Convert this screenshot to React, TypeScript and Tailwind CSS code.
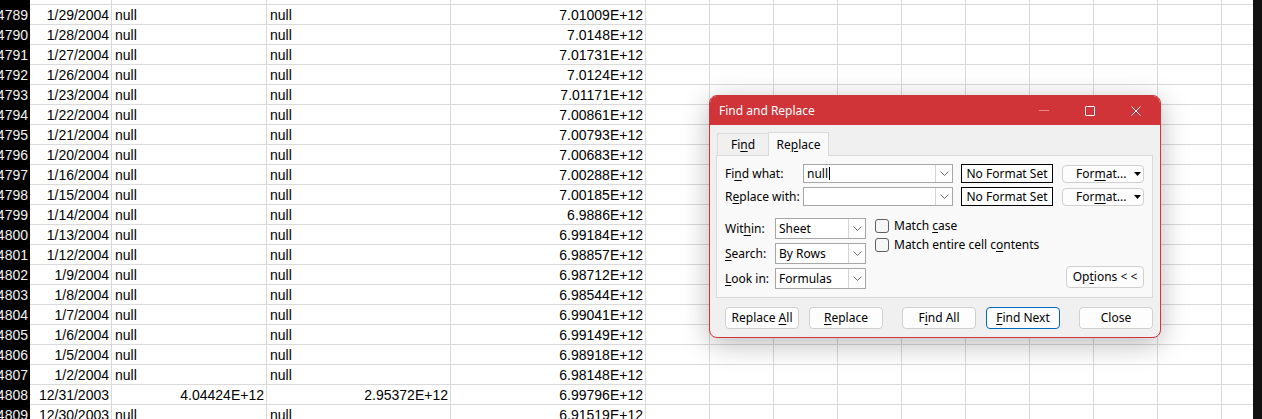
import React from 'react';

// row number, date, col B, col C, col D
const rows: [number, string, string, string, string][] = [
  [4788, '1/30/2004', 'null', 'null', '7.00954E+12'],
  [4789, '1/29/2004', 'null', 'null', '7.01009E+12'],
  [4790, '1/28/2004', 'null', 'null', '7.0148E+12'],
  [4791, '1/27/2004', 'null', 'null', '7.01731E+12'],
  [4792, '1/26/2004', 'null', 'null', '7.0124E+12'],
  [4793, '1/23/2004', 'null', 'null', '7.01171E+12'],
  [4794, '1/22/2004', 'null', 'null', '7.00861E+12'],
  [4795, '1/21/2004', 'null', 'null', '7.00793E+12'],
  [4796, '1/20/2004', 'null', 'null', '7.00683E+12'],
  [4797, '1/16/2004', 'null', 'null', '7.00288E+12'],
  [4798, '1/15/2004', 'null', 'null', '7.00185E+12'],
  [4799, '1/14/2004', 'null', 'null', '6.9886E+12'],
  [4800, '1/13/2004', 'null', 'null', '6.99184E+12'],
  [4801, '1/12/2004', 'null', 'null', '6.98857E+12'],
  [4802, '1/9/2004', 'null', 'null', '6.98712E+12'],
  [4803, '1/8/2004', 'null', 'null', '6.98544E+12'],
  [4804, '1/7/2004', 'null', 'null', '6.99041E+12'],
  [4805, '1/6/2004', 'null', 'null', '6.99149E+12'],
  [4806, '1/5/2004', 'null', 'null', '6.98918E+12'],
  [4807, '1/2/2004', 'null', 'null', '6.98148E+12'],
  [4808, '12/31/2003', '4.04424E+12', '2.95372E+12', '6.99796E+12'],
  [4809, '12/30/2003', 'null', 'null', '6.91519E+12'],
];

const emptyCols = [0, 1, 2, 3, 4, 5, 6, 7, 8];

const isNum = (v: string) => v !== 'null';

const Cell: React.FC<{ w: string; value?: string; right?: boolean }> = ({ w, value, right }) => (
  <div
    className={`${w} shrink-0 h-[20px] border-r border-b border-[#dadada] overflow-hidden whitespace-nowrap pt-[1px] leading-[18px] ${
      right ? 'text-right pr-[2px]' : 'pl-[3px]'
    }`}
  >
    {value}
  </div>
);

const Chevron: React.FC = () => (
  <svg width="9" height="5" viewBox="0 0 9 5" fill="none">
    <path d="M0.5 0.5 L4.5 4.5 L8.5 0.5" stroke="#6b6b6b" strokeWidth="1" />
  </svg>
);

// accelerator key underline
const U: React.FC<{ children: React.ReactNode }> = ({ children }) => <span className="underline underline-offset-2">{children}</span>;

const ComboBox: React.FC<{ w: string; h: string; value?: string; caret?: boolean }> = ({ w, h, value, caret }) => (
  <div className={`${w} ${h} flex border border-[#a6a6a6] bg-white`}>
    <div className="flex-1 flex items-center pl-[3px] text-black">
      {value}
      {caret && <span className="inline-block w-[1px] h-[13px] bg-black ml-[1px]" />}
    </div>
    <div className="w-[17px] flex items-center justify-center border-l border-[#d4d4d4] bg-[#fdfdfd]">
      <Chevron />
    </div>
  </div>
);

const Btn: React.FC<{ children: React.ReactNode; className?: string; primary?: boolean }> = ({ children, className, primary }) => (
  <div
    className={`h-[22px] flex items-center justify-center rounded-[4px] bg-[#fdfdfd] border ${
      primary ? 'border-[#0067c0]' : 'border-[#d0d0d0]'
    } ${className ?? ''}`}
  >
    <span className="whitespace-pre">{children}</span>
  </div>
);

const FormatBtn: React.FC = () => (
  <div className="ml-[9px] w-[82px] h-[18px] flex items-center rounded-[4px] bg-[#fdfdfd] border border-[#d0d0d0] pl-[13px]">
    <span className="whitespace-nowrap">
      For<U>m</U>at...
    </span>
    <svg className="ml-[8px] shrink-0" width="7" height="4" viewBox="0 0 7 4">
      <path d="M0 0 L7 0 L3.5 4 Z" fill="black" />
    </svg>
  </div>
);

const Checkbox: React.FC<{ label: React.ReactNode }> = ({ label }) => (
  <div className="flex items-center h-[14px]">
    <div className="w-[14px] h-[14px] rounded-[3px] border border-[#5f5f5f] bg-[#f6f6f6]" />
    <span className="ml-[5px]">{label}</span>
  </div>
);

const FindReplaceDialog: React.FC = () => (
  <div
    className="absolute left-[709px] top-[95px] w-[452px] h-[243px] rounded-[8px] border border-[#d13438] bg-[#f0f0f0] overflow-hidden shadow-[0_6px_28px_rgba(0,0,0,0.28)] text-[12px] text-black"
    style={{ fontFamily: '"Noto Sans", "Open Sans", sans-serif' }}
  >
    {/* title bar */}
    <div className="h-[29px] bg-[#d13438] flex items-center text-white">
      <span className="ml-[9px] flex-1">Find and Replace</span>
      <div className="w-[46px] flex justify-center">
        <div className="w-[10px] h-[1px] bg-[#e78a8c]" />
      </div>
      <div className="w-[46px] flex justify-center">
        <div className="w-[10px] h-[10px] border border-white rounded-[1px]" />
      </div>
      <div className="w-[46px] flex justify-center mr-[1px]">
        <svg width="10" height="10" viewBox="0 0 10 10">
          <path d="M0.5 0.5 L9.5 9.5 M9.5 0.5 L0.5 9.5" stroke="white" strokeWidth="1" />
        </svg>
      </div>
    </div>

    {/* tabs */}
    <div className="h-[30px] flex items-end pl-[7px]">
      <div className="w-[52px] h-[22px] flex items-center justify-center border border-b-0 border-[#dadada] bg-[#f0f0f0]">
        <span>
          Fi<U>n</U>d
        </span>
      </div>
      <div className="w-[61px] h-[24px] -ml-[1px] flex items-center justify-center border border-b-0 border-[#dadada] bg-[#f9f9f9] relative top-[1px]">
        <span>
          Re<U>p</U>lace
        </span>
      </div>
    </div>

    {/* panel */}
    <div className="ml-[6px] w-[437px] h-[143px] border border-[#dadada] bg-[#f9f9f9] pt-[8px] pl-[8px] pr-[8px]">
      <div className="flex items-center h-[19px]">
        <span className="w-[78px]">Fi<U>n</U>d what:</span>
        <ComboBox w="w-[150px]" h="h-[19px]" value="null" caret />
        <div className="ml-[8px] w-[92px] h-[19px] border border-black bg-white flex items-center justify-center">No Format Set</div>
        <FormatBtn />
      </div>
      <div className="flex items-center h-[19px] mt-[4px]">
        <span className="w-[78px]">R<U>e</U>place with:</span>
        <ComboBox w="w-[150px]" h="h-[19px]" />
        <div className="ml-[8px] w-[92px] h-[19px] border border-black bg-white flex items-center justify-center">No Format Set</div>
        <FormatBtn />
      </div>

      <div className="flex mt-[12px]">
        <div className="flex flex-col gap-[4px]">
          <div className="flex items-center">
            <span className="w-[50px]">Wit<U>h</U>in:</span>
            <ComboBox w="w-[91px]" h="h-[21px]" value="Sheet" />
          </div>
          <div className="flex items-center">
            <span className="w-[50px]"><U>S</U>earch:</span>
            <ComboBox w="w-[91px]" h="h-[21px]" value="By Rows" />
          </div>
          <div className="flex items-center">
            <span className="w-[50px]"><U>L</U>ook in:</span>
            <ComboBox w="w-[91px]" h="h-[21px]" value="Formulas" />
          </div>
        </div>
        <div className="ml-[9px] flex flex-col gap-[5px] pt-[1px]">
          <Checkbox label={<>Match <U>c</U>ase</>} />
          <Checkbox label={<>Match entire cell c<U>o</U>ntents</>} />
        </div>
        <div className="flex-1 flex flex-col justify-end items-end pb-[1px]">
          <Btn className="w-[78px]">
            Op<U>t</U>ions &lt; &lt;
          </Btn>
        </div>
      </div>
    </div>

    {/* buttons */}
    <div className="flex mt-[9px] pl-[15px]">
      <Btn className="w-[74px]">Replace <U>A</U>ll</Btn>
      <Btn className="w-[74px] ml-[10px]"><U>R</U>eplace</Btn>
      <Btn className="w-[74px] ml-[19px]">F<U>i</U>nd All</Btn>
      <Btn className="w-[74px] ml-[10px]" primary><U>F</U>ind Next</Btn>
      <Btn className="w-[74px] ml-[19px]">Close</Btn>
    </div>
  </div>
);

export default function App() {
  return (
    <div
      className="relative w-[1262px] h-[419px] overflow-hidden bg-white flex text-[14px] text-black"
      style={{ fontFamily: '"Liberation Sans", Arial, sans-serif' }}
    >
      <div className="flex-1 overflow-hidden">
        <div className="-mt-[15px]">
          {rows.map(([n, date, b, c, d]) => (
            <div key={n} className="flex h-[20px]">
              <div className="w-[30px] shrink-0 h-[20px] bg-black text-[#f2f2f2] pr-[2px] pt-[1px] leading-[18px] overflow-hidden whitespace-nowrap flex justify-end">
                {n}
              </div>
              <Cell w="w-[82px]" value={date} right />
              <Cell w="w-[155px]" value={b} right={isNum(b)} />
              <Cell w="w-[184px]" value={c} right={isNum(c)} />
              <Cell w="w-[195px]" value={d} right />
              {emptyCols.map((i) => (
                <Cell key={i} w="w-[64px]" />
              ))}
              <div className="flex-1 h-[20px] border-b border-[#dadada]" />
            </div>
          ))}
        </div>
      </div>
      <div className="w-[9px] shrink-0 bg-[#111111]" />
      <FindReplaceDialog />
    </div>
  );
}
